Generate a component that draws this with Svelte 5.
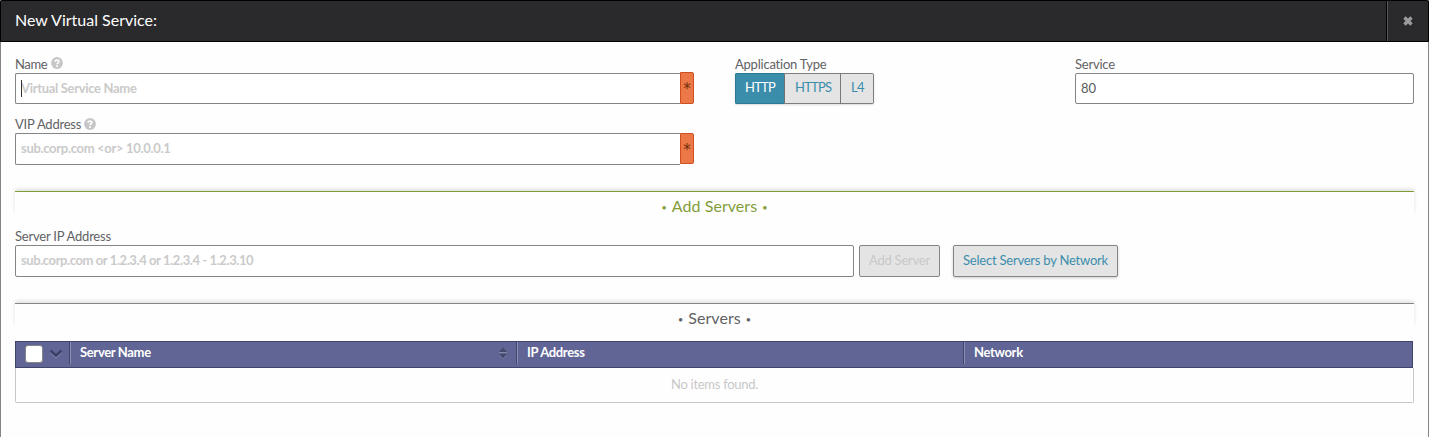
<script>
  let name = $state('');
  let vip = $state('');
  let server = $state('');
  let port = $state('80');
  let appType = $state('HTTP');
  const appTypes = ['HTTP', 'HTTPS', 'L4'];
</script>

{#snippet help()}
  <svg class="help" viewBox="0 0 12 12" width="12" height="12" aria-hidden="true">
    <circle cx="6" cy="6" r="5.9" fill="#c6c6c6" />
    <path d="M4.1 4.7C4.2 2.4 7.9 2.5 7.8 4.6C7.7 5.8 6.1 5.9 6.1 7.2" fill="none" stroke="#fff" stroke-width="1.7" />
    <rect x="5.2" y="8.2" width="1.8" height="1.7" fill="#fff" />
  </svg>
{/snippet}

<div class="dialog">
  <header>
    <h1>New Virtual Service:</h1>
    <button class="close" aria-label="Close">
      <svg viewBox="0 0 10 10" width="10" height="10">
        <path d="M1.5 1.5L8.5 8.5M8.5 1.5L1.5 8.5" stroke="#9b9b9e" stroke-width="3.4" />
      </svg>
    </button>
  </header>

  <main>
    <div class="top">
      <div class="identity">
        <label for="name" class="tight">Name{@render help()}</label>
        <div class="required">
          <div class="field first">
            <span class="caret"></span>
            <input id="name" class="ph-name" bind:value={name} placeholder="Virtual Service Name" />
          </div>
          <span class="star tall">*</span>
        </div>
        <label for="vip" class="second">VIP Address{@render help()}</label>
        <div class="required vip">
          <div class="field"><input id="vip" bind:value={vip} placeholder="sub.corp.com <or> 10.0.0.1" /></div>
          <span class="star">*</span>
        </div>
      </div>
      <div class="types">
        <span class="label">Application Type</span>
        <div class="group">
          {#each appTypes as t}
            <button class:active={appType === t} onclick={() => (appType = t)}>{t}</button>
          {/each}
        </div>
      </div>
      <div class="service">
        <label for="port">Service</label>
        <div class="field"><input id="port" class="port" bind:value={port} /></div>
      </div>
    </div>

    <h2 class="green"><i>•</i><span>Add Servers</span><i>•</i></h2>

    <label for="server" class="server-label">Server IP Address</label>
    <div class="add">
      <div class="field"><input id="server" class="ph-server" bind:value={server} placeholder="sub.corp.com or 1.2.3.4 or 1.2.3.4 - 1.2.3.10" /></div>
      <button class="btn off" disabled>Add Server</button>
      <button class="btn select">Select Servers by Network</button>
    </div>

    <h2 class="servers"><i>•</i><span>Servers</span><i>•</i></h2>

    <div class="thead">
      <div class="cell pick">
        <span class="check"></span>
        <svg viewBox="0 0 14 10" width="14" height="10">
          <path d="M1.5 2.8L7 8L12.5 2.8" fill="none" stroke="#9598bb" stroke-width="2" />
          <path d="M1.5 1.6L7 6.6L12.5 1.6" fill="none" stroke="#3e426b" stroke-width="2.8" />
        </svg>
      </div>
      <div class="cell">
        <span>Server Name</span>
        <svg viewBox="0 0 8 12" width="8" height="12">
          <path d="M0 5L4 .5L8 5Z" fill="#45486b" />
          <path d="M0 5.5H8" stroke="#8487a8" />
          <path d="M0 7H8L4 11.5Z" fill="#45486b" />
          <path d="M.2 7.8L4 12L7.8 7.8" fill="none" stroke="#8487a8" stroke-width=".7" />
        </svg>
      </div>
      <div class="cell"><span>IP Address</span></div>
      <div class="cell"><span>Network</span></div>
    </div>
    <div class="empty">No items found.</div>
  </main>
</div>

<style>
  :global(body) { background: #fff; overflow: hidden; }
  .dialog, .dialog * { box-sizing: border-box; }
  .dialog {
    height: 437px;
    font: 13px/16px Lato, sans-serif;
    letter-spacing: -0.22px;
    color: #626264;
    border: solid #858585;
    border-width: 0 1px;
    background: #fefefe;
  }
  button, input { font: inherit; letter-spacing: inherit; margin: 0; }
  header {
    display: flex;
    height: 42px;
    margin: 0 -1px;
    border: 1px solid #000;
    border-radius: 2px 2px 0 0;
    background: #2a2a2c;
  }
  h1 {
    flex: 1;
    margin: 0;
    padding-left: 14px;
    font: 400 16px/38px Lato, sans-serif;
    letter-spacing: 0;
    color: #fff;
  }
  .close {
    width: 42px;
    padding: 0;
    border: 0;
    border-left: 1px solid #000;
    box-shadow: inset 1px 0 #58585a;
    background: none;
    display: flex;
    align-items: center;
    justify-content: center;
  }
  main { padding: 14px 14px 0; }
  .top { display: flex; height: 135px; }
  .identity { width: 679px; margin-right: 41px; }
  .types { width: 340px; }
  .service { flex: 1; }
  label, .label { display: flex; height: 17px; }
  .tight { letter-spacing: -0.4px; }
  .help { margin: 1px 0 0 4px; }
  .second .help { margin: 2px 0 0 3px; }
  .second { margin-top: 12px; }
  .required { display: flex; height: 31px; }
  .vip { height: 32px; }
  .field {
    position: relative;
    display: flex;
    flex: 1;
    height: 31px;
    border: 1px solid #858585;
    border-radius: 2px;
    background: #fff;
  }
  .service .field { flex: none; }
  .vip .field { height: 32px; }
  .required .field { border-right: 0; border-radius: 2px 0 0 2px; }
  input {
    width: 100%;
    padding: 0 0 1px 5px;
    border: 0;
    outline: 0;
    background: none;
    color: #58585a;
    letter-spacing: -0.31px;
  }
  .vip input, .add input { padding-bottom: 2px; }
  input::placeholder { color: #cacaca; font-weight: 700; opacity: 1; }
  .ph-name { letter-spacing: -0.32px; }
  .ph-server { letter-spacing: -0.41px; }
  .port { letter-spacing: 0; }
  .caret { position: absolute; left: 5px; top: 6px; width: 1px; height: 17px; background: #333; }
  .star {
    width: 14px;
    height: 31px;
    border: 1px solid #d04f20;
    border-radius: 0 2px 2px 0;
    background: #ec7848;
    color: #74300f;
    font: 400 15px/32px "DejaVu Sans", sans-serif;
    text-align: center;
    letter-spacing: 0;
  }
  .tall { height: 32px; margin-top: -1px; }
  .group { display: flex; height: 31px; width: max-content; }
  .group button {
    height: 31px;
    padding: 0 9px 3px 10px;
    border: 1px solid #7d7d7d;
    border-left: 0;
    background: #e4e4e4;
    color: #3b8dac;
    letter-spacing: -0.8px;
    width: 56px;
    white-space: nowrap;
    box-shadow: 0 1px 2px #0002;
  }
  .group button:first-child { width: 50px; padding-left: 9px; border: 1px solid #2d7893; border-right-color: #777; border-radius: 2px 0 0 2px; }
  .group button:last-child { width: 33px; letter-spacing: -0.6px; border-radius: 0 2px 2px 0; }
  .group .active { background: #3b8dac; color: #fff; }
  h2 {
    display: flex;
    justify-content: center;
    gap: 5px;
    height: 23px;
    margin: 0;
    border-top: 1px solid #858585;
    box-shadow: 0 -2px 4px #0000001f;
    clip-path: inset(-8px -4px 0 -4px);
    font: 400 16px/28px Lato, sans-serif;
    letter-spacing: 0.05px;
    color: #626264;
    background: #fefefe;
  }
  h2 span, h2 i { height: 28px; }
  h2 i { font-style: normal; font-size: 9px; line-height: 32px; }
  .green { border-color: #829d38; color: #829d38; }
  .server-label { margin-top: 14px; }
  .add { display: flex; height: 32px; }
  .add .field { flex: none; width: 839px; height: 32px; }
  .btn {
    height: 32px;
    padding: 0 0 3px;
    border: 1px solid #858585;
    border-radius: 2px;
    background: #e4e4e4;
  }
  .off { width: 81px; margin-left: 5px; color: #c8c8c8; }
  .select { width: 165px; margin-left: 13px; color: #3b8dac; box-shadow: 0 1px 3px #0003; }
  .servers { margin-top: 26px; }
  .thead {
    display: grid;
    grid-template-columns: 53px 447px 447px 1fr;
    height: 27px;
    width: 1398px;
    margin-top: 15px;
    border: 1px solid #40446c;
    background: #606595;
    color: #fff;
    font-weight: 700;
    letter-spacing: -0.34px;
  }
  .cell {
    display: flex;
    align-items: center;
    justify-content: space-between;
    height: 22px;
    padding: 0 9px 0 10px;
    border-left: 1px solid #40446c;
    box-shadow: inset 1px 0 #8c90b4;
  }
  .cell > span:not(.check) { height: 18px; }
  .pick { border: 0; box-shadow: none; justify-content: flex-start; padding: 2px 0 0 9px; gap: 6px; }
  .check { width: 18px; height: 18px; border: 1px solid #858585; border-radius: 3px; background: #fff; }
  .empty {
    height: 35px;
    border: 1px solid #c8c8c8;
    border-top: 0;
    border-radius: 0 0 2px 2px;
    line-height: 33px;
    text-align: center;
    color: #c8c8c8;
    letter-spacing: -0.28px;
  }
</style>
